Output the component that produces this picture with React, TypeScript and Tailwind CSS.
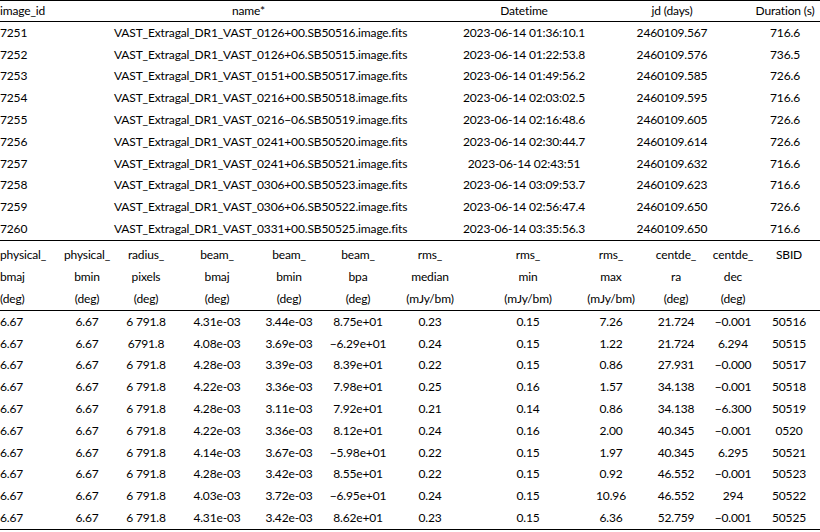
import React from "react";

const images = [
  ["7251", "VAST_Extragal_DR1_VAST_0126+00.SB50516.image.fits", "2023-06-14 01:36:10.1", "2460109.567", "716.6"],
  ["7252", "VAST_Extragal_DR1_VAST_0126+06.SB50515.image.fits", "2023-06-14 01:22:53.8", "2460109.576", "736.5"],
  ["7253", "VAST_Extragal_DR1_VAST_0151+00.SB50517.image.fits", "2023-06-14 01:49:56.2", "2460109.585", "726.6"],
  ["7254", "VAST_Extragal_DR1_VAST_0216+00.SB50518.image.fits", "2023-06-14 02:03:02.5", "2460109.595", "716.6"],
  ["7255", "VAST_Extragal_DR1_VAST_0216\u221206.SB50519.image.fits", "2023-06-14 02:16:48.6", "2460109.605", "726.6"],
  ["7256", "VAST_Extragal_DR1_VAST_0241+00.SB50520.image.fits", "2023-06-14 02:30:44.7", "2460109.614", "726.6"],
  ["7257", "VAST_Extragal_DR1_VAST_0241+06.SB50521.image.fits", "2023-06-14 02:43:51", "2460109.632", "716.6"],
  ["7258", "VAST_Extragal_DR1_VAST_0306+00.SB50523.image.fits", "2023-06-14 03:09:53.7", "2460109.623", "716.6"],
  ["7259", "VAST_Extragal_DR1_VAST_0306+06.SB50522.image.fits", "2023-06-14 02:56:47.4", "2460109.650", "726.6"],
  ["7260", "VAST_Extragal_DR1_VAST_0331+00.SB50525.image.fits", "2023-06-14 03:35:56.3", "2460109.650", "716.6"],
];

const statsHead = [
  ["physical_", "bmaj", "(deg)"],
  ["physical_", "bmin", "(deg)"],
  ["radius_", "pixels", "(deg)"],
  ["beam_", "bmaj", "(deg)"],
  ["beam_", "bmin", "(deg)"],
  ["beam_", "bpa", "(deg)"],
  ["rms_", "median", "(mJy/bm)"],
  ["rms_", "min", "(mJy/bm)"],
  ["rms_", "max", "(mJy/bm)"],
  ["centde_", "ra", "(deg)"],
  ["centde_", "dec", "(deg)"],
  ["SBID", "", ""],
];

const M = "\u2212";

const stats = [
  ["6.67", "6.67", "6 791.8", "4.31e-03", "3.44e-03", "8.75e+01", "0.23", "0.15", "7.26", "21.724", `${M}0.001`, "50516"],
  ["6.67", "6.67", "6791.8", "4.08e-03", "3.69e-03", `${M}6.29e+01`, "0.24", "0.15", "1.22", "21.724", "6.294", "50515"],
  ["6.67", "6.67", "6 791.8", "4.28e-03", "3.39e-03", "8.39e+01", "0.22", "0.15", "0.86", "27.931", `${M}0.000`, "50517"],
  ["6.67", "6.67", "6 791.8", "4.22e-03", "3.36e-03", "7.98e+01", "0.25", "0.16", "1.57", "34.138", `${M}0.001`, "50518"],
  ["6.67", "6.67", "6 791.8", "4.28e-03", "3.11e-03", "7.92e+01", "0.21", "0.14", "0.86", "34.138", `${M}6.300`, "50519"],
  ["6.67", "6.67", "6 791.8", "4.22e-03", "3.36e-03", "8.12e+01", "0.24", "0.16", "2.00", "40.345", `${M}0.001`, "0520"],
  ["6.67", "6.67", "6 791.8", "4.14e-03", "3.67e-03", `${M}5.98e+01`, "0.22", "0.15", "1.97", "40.345", "6.295", "50521"],
  ["6.67", "6.67", "6 791.8", "4.28e-03", "3.42e-03", "8.55e+01", "0.22", "0.15", "0.92", "46.552", `${M}0.001`, "50523"],
  ["6.67", "6.67", "6 791.8", "4.03e-03", "3.72e-03", `${M}6.95e+01`, "0.24", "0.15", "10.96", "46.552", "294", "50522"],
  ["6.67", "6.67", "6 791.8", "4.31e-03", "3.42e-03", "8.62e+01", "0.23", "0.15", "6.36", "52.759", `${M}0.001`, "50525"],
];

const imgCols = "grid grid-cols-[114px_340px_140px_156px_70px]";
const statCols = "grid grid-cols-[72px_30px_88px_54px_90px_48px_96px_100px_66px_64px_50px_62px]";

const Cell = ({ children, first }: { children: React.ReactNode; first?: boolean }) => (
  <div className={`flex items-center whitespace-nowrap ${first ? "justify-start" : "justify-center"}`}>{children}</div>
);

export default function App() {
  return (
    <div className="w-[820px] h-[532px] overflow-hidden bg-white text-black font-['Lato',sans-serif] text-[12px] tracking-[-0.15px]">
      {/* image table */}
      <div className="border-t border-black">
        <div className={`${imgCols} h-[21px] border-b border-black`}>
          <Cell first>image_id</Cell>
          <div className="flex items-center pl-[118px]">name*</div>
          <Cell>Datetime</Cell>
          <Cell>jd (days)</Cell>
          <Cell>Duration (s)</Cell>
        </div>
        {images.map((r) => (
          <div key={r[0]} className={`${imgCols} h-[21.8px]`}>
            <Cell first>{r[0]}</Cell>
            <Cell first>{r[1]}</Cell>
            <Cell>{r[2]}</Cell>
            <Cell>{r[3]}</Cell>
            <Cell>{r[4]}</Cell>
          </div>
        ))}
      </div>

      {/* stats table */}
      <div className="border-t border-black">
        <div className="border-b border-black pt-[3px]">
          {[0, 1, 2].map((line) => (
            <div key={line} className={`${statCols} h-[22px]`}>
              {statsHead.map((h, i) => (
                <Cell key={i} first={i === 0}>{h[line]}</Cell>
              ))}
            </div>
          ))}
        </div>
        {stats.map((r, k) => (
          <div key={k} className={`${statCols} h-[21.8px]`}>
            {r.map((v, i) => (
              <Cell key={i} first={i === 0}>{v}</Cell>
            ))}
          </div>
        ))}
        <div className="border-t border-black" />
      </div>
    </div>
  );
}
